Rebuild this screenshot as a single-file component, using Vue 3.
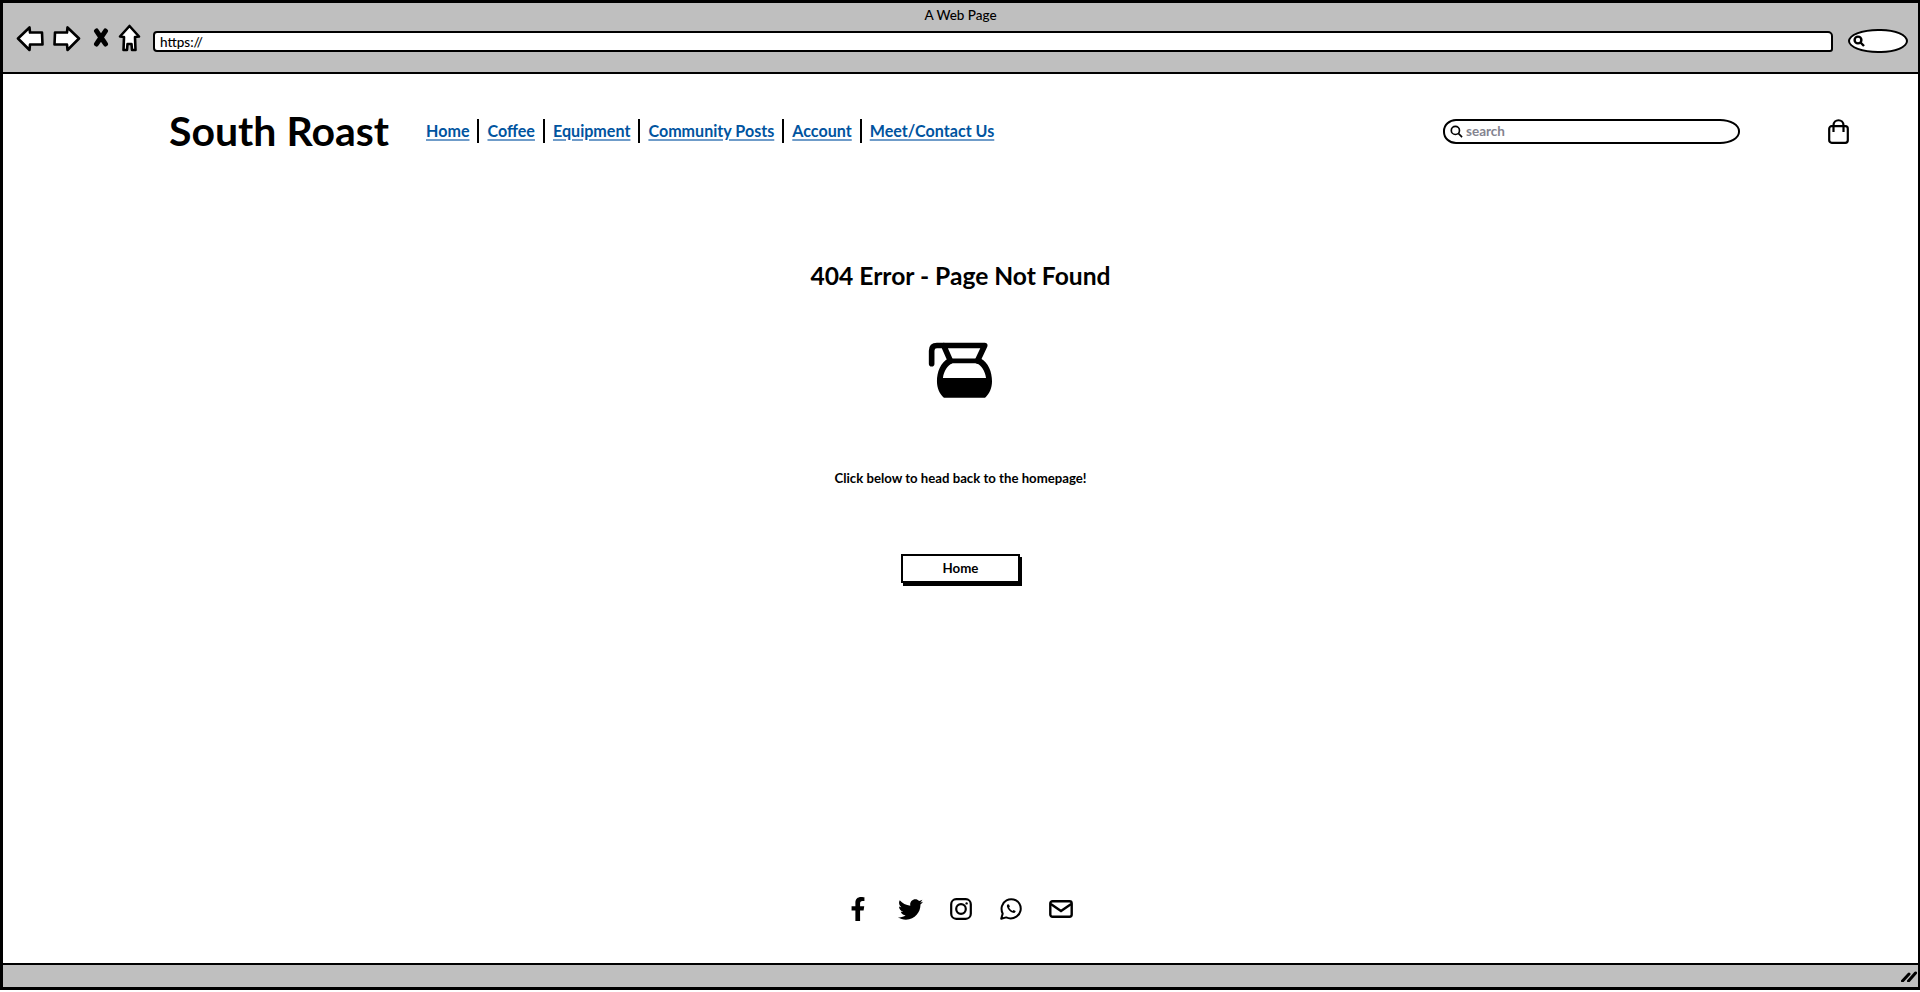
<script setup>
const links = ['Home', 'Coffee', 'Equipment', 'Community Posts', 'Account', 'Meet/Contact Us']
</script>

<template>
  <div class="window">
    <div class="chrome">
      <div class="page-title">A Web Page</div>
      <div class="controls">
        <svg class="ic-arrow" viewBox="0 0 28 26"><path d="M2 12.500 L13.500 1.500 L14 6.500 L26 6.500 L26.500 18.500 L14 18.500 L13.500 24 Z" /></svg>
        <svg class="ic-arrow fwd" viewBox="0 0 28 26"><path d="M26 12.500 L14.500 1.500 L14 6.500 L2 6.500 L1.500 18.500 L14 18.500 L14.500 24 Z" /></svg>
        <svg class="ic-x" viewBox="0 0 16 19"><path d="M3.500 3 C6 7 10 12 12.500 16 M12.500 3 C10 7 6 12 3.500 16" /></svg>
        <svg class="ic-home" viewBox="0 0 23 28"><path d="M11.500 2 L21 12.500 L17 13 L17.500 26 L14 26 L13.500 20 L9.500 20 L9 26 L5.500 26 L6 13 L2 12.500 Z" /></svg>
        <div class="url">https://</div>
        <div class="mini-search">
          <svg viewBox="0 0 12 12"><circle cx="5" cy="5" r="3.400" /><path d="M7.500 7.500 L11 11" /></svg>
        </div>
      </div>
    </div>

    <main class="page">
      <header class="site-header">
        <h1 class="brand">South Roast</h1>
        <nav class="nav">
          <template v-for="(l, i) in links" :key="l">
            <a href="#" class="nav-link">{{ l }}</a>
            <span v-if="i < links.length - 1" class="sep"></span>
          </template>
        </nav>
        <div class="search">
          <svg viewBox="0 0 14 14"><circle cx="5.800" cy="5.800" r="4.400" /><path d="M9 9 L13 13" /></svg>
          <span>search</span>
        </div>
        <svg class="bag" viewBox="0 0 21 25"><rect x="1.200" y="7.200" width="18.600" height="16.600" rx="2.500" /><path d="M5.500 13 V6.500 C5.500 -0.500 15.500 -0.500 15.500 6.500 V13" /></svg>
      </header>

      <section class="error">
        <h2>404 Error - Page Not Found</h2>
        <svg class="pot" viewBox="445 272 196 174">
          <path class="pot-line" d="M456 340 V301 Q456 285 472 285 H616 L594 332 M492 285 L513 332" />
          <path class="pot-body" fill-rule="evenodd" d="M506 324 H604 C627 336 638 365 638 393 C638 414 630 431 617 443 H493 C480 431 472 414 472 393 C472 365 483 336 506 324 Z M490 383 H620 C617 362 606 346 592 339 H518 C504 346 493 362 490 383 Z" />
        </svg>
        <p>Click below to head back to the homepage!</p>
        <a href="#" class="btn">Home</a>
      </section>

      <footer class="social">
        <svg class="s-f" viewBox="0 0 320 512"><path d="M279.140 288l14.220-92.660h-88.910v-60.130c0-25.350 12.420-50.060 52.240-50.060h40.420V6.260S260.430 0 225.360 0c-73.220 0-121.080 44.380-121.080 124.720v70.620H22.890V288h81.390v224h100.170V288z" /></svg>
        <svg class="s-t" viewBox="0 0 512 512"><path d="M459.370 151.716c.325 4.548.325 9.097.325 13.645 0 138.720-105.583 298.558-298.558 298.558-59.452 0-114.680-17.219-161.137-47.106 8.447.974 16.568 1.299 25.340 1.299 49.055 0 94.213-16.568 130.274-44.832-46.132-.975-84.792-31.188-98.112-72.772 6.498.974 12.995 1.624 19.818 1.624 9.421 0 18.843-1.300 27.614-3.573-48.081-9.747-84.143-51.980-84.143-102.985v-1.299c13.969 7.797 30.214 12.670 47.431 13.319-28.264-18.843-46.781-51.005-46.781-87.391 0-19.492 5.197-37.360 14.294-52.954 51.655 63.675 129.300 105.258 216.365 109.807-1.624-7.797-2.599-15.918-2.599-24.040 0-57.828 46.782-104.934 104.934-104.934 30.213 0 57.502 12.670 76.670 33.137 23.715-4.548 46.456-13.320 66.599-25.340-7.798 24.366-24.366 44.833-46.132 57.827 21.117-2.273 41.584-8.122 60.426-16.243-14.292 20.791-32.161 39.308-52.628 54.253z" /></svg>
        <svg class="s-i" viewBox="0 0 22 22"><rect x="1.200" y="1.200" width="19.600" height="19.600" rx="5" /><circle cx="11" cy="11" r="4.800" /><circle class="dot" cx="16.600" cy="5.400" r="1.200" /></svg>
        <svg class="s-w" viewBox="0 0 22 22"><path class="ln" d="M1.200 20.800 L2.700 15.600 C0.200 10.500 2 4.800 6.500 2.400 C11 0 16.700 1.300 19.300 5.600 C22 10 20.800 15.700 16.400 18.600 C13 20.800 9.300 20.800 6.200 19.400 Z" /><path class="ph" d="M7.800 6.200 C7 6.800 6.700 7.700 7 8.700 C7.800 11.300 10.200 13.900 13 14.800 C14.100 15.100 15 14.700 15.500 13.700 L15.600 12.900 L13.500 11.900 L12.600 13 C11 12.300 9.700 11 9.100 9.500 L9.900 8.600 L9 6.400 Z" /></svg>
        <svg class="s-m" viewBox="0 0 24 18"><rect x="1.300" y="1.300" width="21.400" height="15.400" rx="2.200" /><path d="M1.800 4 L12 11 L22.200 4" /></svg>
      </footer>
    </main>

    <div class="statusbar">
      <svg class="grip" viewBox="0 0 16 12"><path d="M1.500 11 L8 4 M7.500 11 L14.500 3" /></svg>
    </div>
  </div>
</template>

<style>
html, body { margin: 0; background: #fff; }
</style>

<style scoped>
.window {
  box-sizing: border-box;
  width: 1920px;
  height: 990px;
  border: 3px solid #000;
  border-right-width: 2px;
  display: flex;
  flex-direction: column;
  font-family: Lato, "Liberation Sans", sans-serif;
  color: #000;
  background: #fff;
}
.chrome {
  box-sizing: border-box;
  height: 71px;
  flex: none;
  background: #bfbfbf;
  border-bottom: 2px solid #000;
}
.page-title {
  text-align: center;
  font-size: 13.500px;
  font-weight: 500;
  line-height: 18px;
  padding-top: 3px;
}
.controls {
  display: flex;
  align-items: center;
  height: 30px;
  margin-top: 2px;
  padding-left: 13px;
  padding-right: 10px;
}
.controls svg { flex: none; }
.ic-arrow { width: 28px; height: 26px; margin: -5px 9px 0 0; }
.ic-arrow path, .ic-home path { fill: #fff; stroke: #000; stroke-width: 2.600; stroke-linejoin: round; }
.ic-x { width: 16px; height: 19px; margin: -8px 9px 0 3px; }
.ic-x path { fill: none; stroke: #000; stroke-width: 5; stroke-linecap: round; }
.ic-home { width: 23px; height: 28px; margin: -6px 12px 0 0; }
.url {
  flex: 1;
  box-sizing: border-box;
  height: 21px;
  background: #fff;
  border: 2px solid #000;
  border-radius: 4px 5px 3px 4px;
  font-size: 13.500px;
  line-height: 18px;
  padding-left: 5px;
  font-weight: 500;
}
.mini-search {
  box-sizing: border-box;
  width: 60px;
  height: 24px;
  margin-left: 15px;
  background: #fff;
  border: 2px solid #000;
  border-radius: 50% 45% 45% 50% / 50%;
  display: flex;
  align-items: center;
  padding-left: 3px;
}
.mini-search svg { width: 12px; height: 12px; }
.mini-search circle, .mini-search path { fill: none; stroke: #000; stroke-width: 2.400; }

.page { flex: 1; display: flex; flex-direction: column; min-height: 0; }
.site-header {
  display: flex;
  align-items: center;
  height: 114px;
  padding-left: 166px;
  padding-right: 69px;
  flex: none;
}
.brand {
  margin: 0;
  font-size: 41px;
  font-weight: 700;
  line-height: 48px;
  width: 257px;
  flex: none;
  white-space: nowrap;
}
.nav { display: flex; align-items: center; flex: none; }
.nav-link {
  color: #00549f;
  font-size: 16.100px;
  font-weight: 700;
  line-height: 22px;
  text-decoration: underline;
  text-decoration-color: #6f9cc9;
  text-decoration-thickness: 2px;
  text-underline-offset: 2px;
  white-space: nowrap;
}
.sep {
  width: 2px;
  height: 24px;
  background: #000;
  margin: 0 8px;
  flex: none;
}
.search {
  margin-left: auto;
  box-sizing: border-box;
  width: 297px;
  height: 25px;
  border: 2px solid #000;
  border-radius: 13px 20px 20px 13px / 12px;
  display: flex;
  align-items: center;
  padding-left: 5px;
  gap: 3px;
  color: #83838f;
  font-size: 13.500px;
  font-weight: 700;
  flex: none;
}
.search svg { width: 13px; height: 13px; flex: none; }
.search circle, .search path { fill: none; stroke: #000; stroke-width: 1.800; }
.bag { width: 21px; height: 25px; margin-left: 88px; flex: none; }
.bag rect, .bag path { fill: none; stroke: #000; stroke-width: 2.200; }

.error { display: flex; flex-direction: column; align-items: center; padding-top: 72px; }
.error h2 {
  margin: 0;
  font-size: 24.600px;
  font-weight: 700;
  line-height: 32px;
  white-space: nowrap;
}
.pot { width: 65px; height: 58px; margin-top: 49px; }
.pot-line { fill: none; stroke: #000; stroke-width: 17; stroke-linecap: round; stroke-linejoin: round; }
.pot-body { fill: #000; }
.error p {
  margin: 70px 0 0;
  font-size: 13.200px;
  font-weight: 700;
  line-height: 18px;
}
.btn {
  margin-top: 67px;
  box-sizing: border-box;
  width: 119px;
  height: 29px;
  border: 2px solid #000;
  box-shadow: 2px 3px 0 #000;
  color: #000;
  background: #fff;
  text-decoration: none;
  text-align: center;
  font-size: 13.300px;
  font-weight: 700;
  line-height: 25px;
}

.social {
  margin-top: auto;
  height: 58px;
  flex: none;
  display: flex;
  align-items: center;
  justify-content: center;
  padding-bottom: 25px;
  padding-left: 2px;
}
.social svg { flex: none; fill: #000; }
.s-f { width: 16px; height: 24px; margin-right: 32px; }
.s-t { width: 25px; height: 25px; margin-right: 27px; }
.s-i { width: 22px; height: 22px; margin-right: 28px; }
.s-i rect, .s-i circle { fill: none; stroke: #000; stroke-width: 2.200; }
.s-i .dot { fill: #000; stroke: none; }
.s-w { width: 22px; height: 22px; margin-right: 27px; }
.s-w .ln { fill: none; stroke: #000; stroke-width: 2; stroke-linejoin: round; }
.s-w .ph { fill: #000; }
.s-m { width: 24px; height: 18px; }
.s-m rect, .s-m path { fill: none; stroke: #000; stroke-width: 2.400; }

.statusbar {
  box-sizing: border-box;
  height: 24px;
  flex: none;
  background: #bfbfbf;
  border-top: 2px solid #000;
  display: flex;
  justify-content: flex-end;
  align-items: center;
  padding-right: 1px;
}
.grip { width: 16px; height: 12px; }
.grip path { fill: none; stroke: #000; stroke-width: 3; stroke-linecap: round; }
</style>
